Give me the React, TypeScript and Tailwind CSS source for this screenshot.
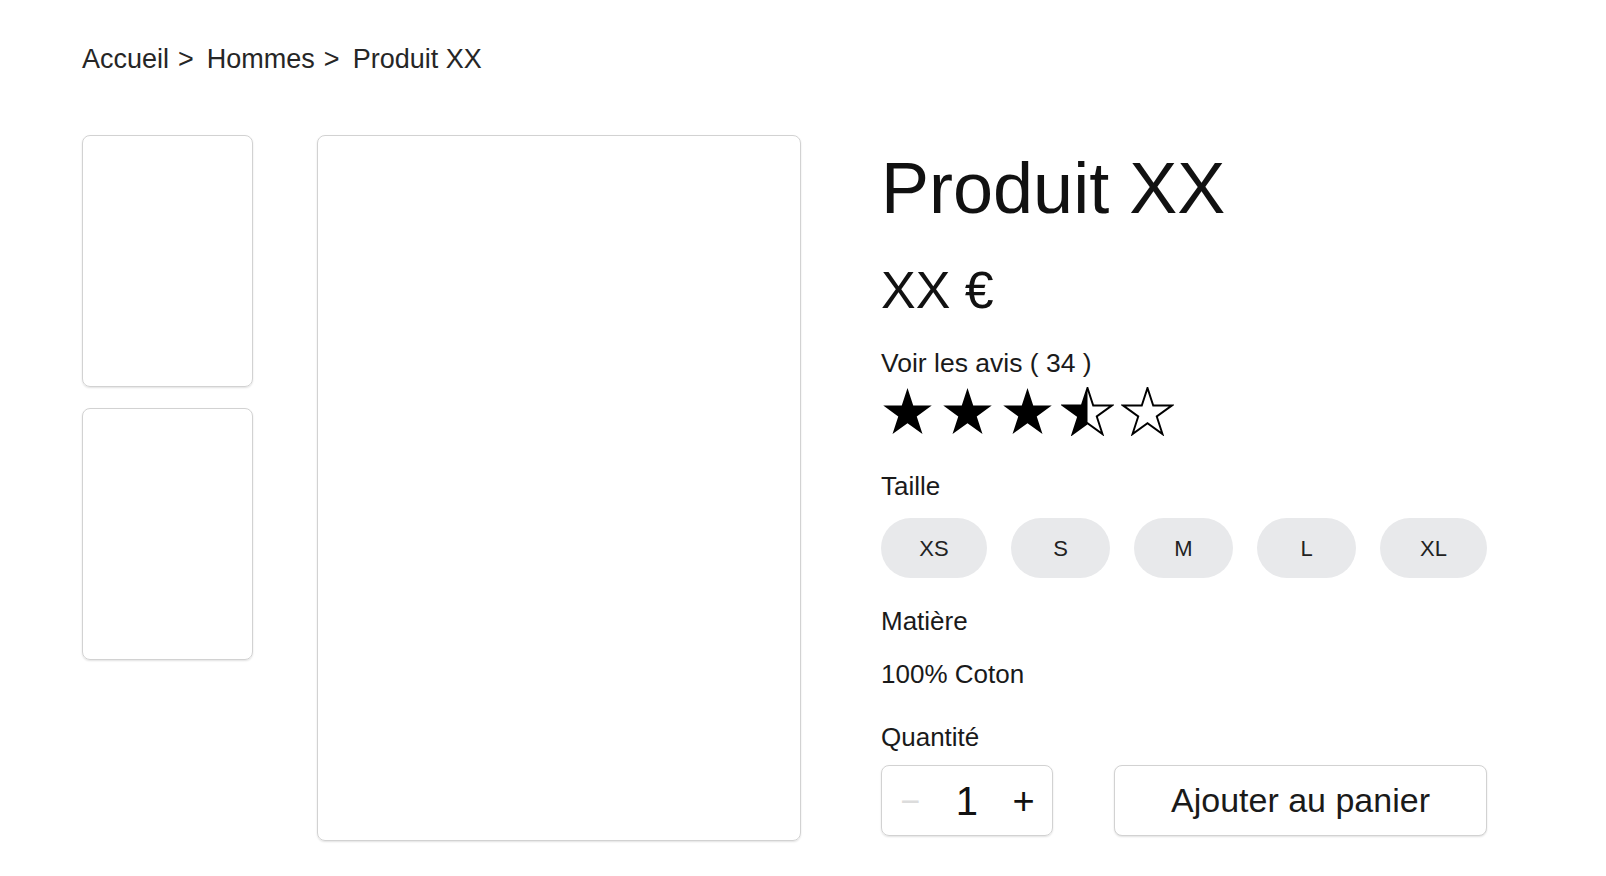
import { useState } from 'react'

const STAR_POINTS =
  '26,0 31.84,17.97 50.73,17.97 35.44,29.07 41.28,47.03 26,35.93 10.72,47.03 16.56,29.07 1.27,17.97 20.16,17.97'

type StarKind = 'full' | 'half' | 'empty'

function Star({ kind, id }: { kind: StarKind; id: string }) {
  return (
    <svg viewBox="-1 -1 54 50" className="h-[49px] w-[53px]">
      {kind === 'half' && (
        <defs>
          <clipPath id={id}>
            <rect x="-1" y="-1" width="27" height="50" />
          </clipPath>
        </defs>
      )}
      {kind === 'full' && <polygon points={STAR_POINTS} fill="#000" />}
      {kind === 'half' && (
        <polygon points={STAR_POINTS} fill="#000" clipPath={`url(#${id})`} />
      )}
      {kind !== 'full' && (
        <polygon
          points={STAR_POINTS}
          fill="none"
          stroke="#000"
          strokeWidth="2"
          strokeLinejoin="miter"
        />
      )}
    </svg>
  )
}

const sizes = [
  { label: 'XS', className: 'w-[106px]' },
  { label: 'S', className: 'w-[99px]' },
  { label: 'M', className: 'w-[99px]' },
  { label: 'L', className: 'w-[99px]' },
  { label: 'XL', className: 'w-[107px]' },
]

const crumbs = ['Accueil', 'Hommes', 'Produit XX']

const stars: StarKind[] = ['full', 'full', 'full', 'half', 'empty']

export default function App() {
  const [qty, setQty] = useState(1)
  const [size, setSize] = useState<string | null>(null)

  return (
    <div className="min-h-screen bg-white pl-[82px] pt-[43px] font-['Liberation_Sans',Arial,sans-serif] text-[#1a1a1a]">
      <nav className="flex text-[27px] leading-[32px] text-[#262626]">
        {crumbs.map((c, i) => (
          <span key={c}>
            {c}
            {i < crumbs.length - 1 && <span className="ml-[9px] mr-[13px]">&gt;</span>}
          </span>
        ))}
      </nav>

      <div className="mt-[60px] flex">
        {/* vignettes */}
        <div className="flex w-[171px] flex-col gap-[21px]">
          <div className="h-[252px] rounded-lg border border-[#d2d2d2] shadow-[0_1px_2px_rgba(0,0,0,0.12)]" />
          <div className="h-[252px] rounded-lg border border-[#d2d2d2] shadow-[0_1px_2px_rgba(0,0,0,0.12)]" />
        </div>

        {/* image principale */}
        <div className="ml-[64px] h-[706px] w-[484px] rounded-lg border border-[#d2d2d2] shadow-[0_1px_2px_rgba(0,0,0,0.12)]" />

        {/* infos produit */}
        <div className="ml-[80px] flex w-[607px] flex-col pt-[13px]">
          <h1 className="text-[72px] leading-[80px] text-[#111]">Produit XX</h1>
          <p className="mt-[32px] text-[52px] leading-[60px] text-[#111]">XX €</p>

          <a href="#avis" className="mt-[27px] text-[26.5px] leading-[32px]">
            Voir les avis ( 34 )
          </a>
          <div className="mt-[8px] flex gap-[7px]">
            {stars.map((kind, i) => (
              <Star key={i} kind={kind} id={`half-star-${i}`} />
            ))}
          </div>

          <p className="mt-[34px] text-[26px] leading-[32px]">Taille</p>
          <div className="mt-[16px] flex gap-[24px]">
            {sizes.map((s) => (
              <button
                key={s.label}
                onClick={() => setSize(s.label)}
                className={`h-[60px] rounded-full text-[22px] text-[#222] ${s.className} ${
                  size === s.label ? 'bg-[#d4d5d8]' : 'bg-[#e8e9eb]'
                }`}
              >
                {s.label}
              </button>
            ))}
          </div>

          <p className="mt-[27px] text-[26px] leading-[32px]">Matière</p>
          <p className="mt-[21px] text-[26px] leading-[32px]">100% Coton</p>

          <p className="mt-[31px] text-[26px] leading-[32px]">Quantité</p>
          <div className="mt-[12px] flex items-center gap-[61px]">
            <div className="grid h-[71px] w-[172px] grid-cols-3 items-center rounded-lg border border-[#d2d2d2] shadow-[0_1px_2px_rgba(0,0,0,0.12)]">
              <button
                onClick={() => setQty((q) => Math.max(1, q - 1))}
                className="text-center text-[34px] leading-none text-[#dcdcdc]"
              >
                −
              </button>
              <span className="text-center text-[40px] leading-none text-[#111]">{qty}</span>
              <button
                onClick={() => setQty((q) => q + 1)}
                className="text-center text-[38px] leading-none text-[#111]"
              >
                +
              </button>
            </div>
            <button className="h-[71px] w-[373px] rounded-lg border border-[#d2d2d2] bg-white text-[34px] text-[#1a1a1a] shadow-[0_1px_2px_rgba(0,0,0,0.12)]">
              Ajouter au panier
            </button>
          </div>
        </div>
      </div>
    </div>
  )
}
